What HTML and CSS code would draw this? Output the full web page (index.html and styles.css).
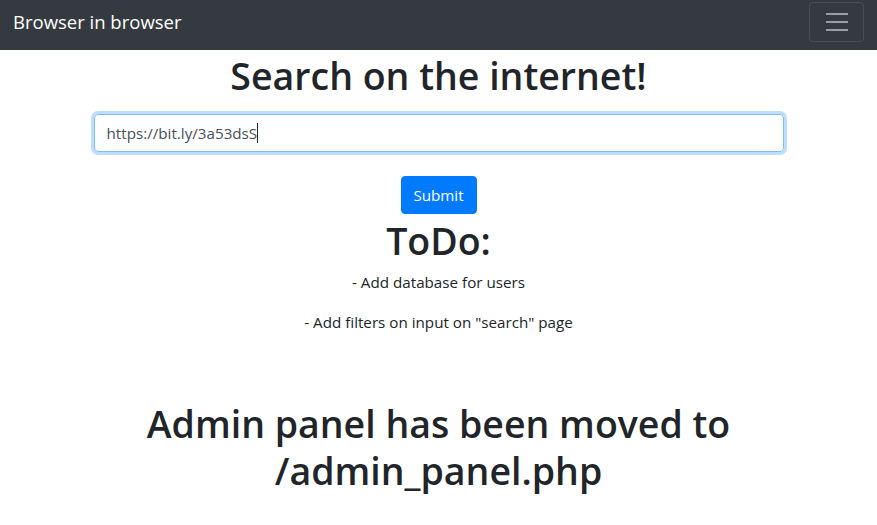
FILE: index.html
```html
<!DOCTYPE html>
<html lang="en">
<head>
<meta charset="utf-8">
<title>Browser in browser</title>
<link rel="stylesheet" href="styles.css">
</head>
<body>
<nav class="navbar">
  <a class="brand" href="#">Browser in browser</a>
  <button class="toggler" type="button" aria-label="Toggle navigation">
    <svg class="toggler-icon" width="30" height="30" viewBox="0 0 30 30"><path d="M4 7h22M4 15h22M4 23h22" stroke="rgba(255,255,255,0.5)" stroke-width="2" stroke-linecap="butt" fill="none"/></svg>
  </button>
</nav>
<main class="content">
  <h1 class="heading heading-search">Search on the internet!</h1>
  <form class="search" action="#">
    <div class="field"><span class="field-text">https://bit.ly/3a53dsS</span><span class="caret"></span></div>
    <button class="submit" type="button">Submit</button>
  </form>
  <h1 class="heading heading-todo">ToDo:</h1>
  <p class="todo">- Add database for users</p>
  <p class="todo">- Add filters on input on "search" page</p>
  <h1 class="heading heading-notice"><span class="notice-line">Admin panel has been moved to</span><span class="notice-line">/admin_panel.php</span></h1>
</main>
</body>
</html>
```

FILE: styles.css
```css
* { box-sizing: border-box; }
html, body { margin: 0; padding: 0; }
body {
  font-family: "Open Sans", "Noto Sans", Arial, sans-serif;
  font-size: 15.2px;
  line-height: 24px;
  color: #212529;
  background: #fff;
}
.navbar {
  height: 50px;
  background: #343a40;
  display: flex;
  align-items: flex-start;
  justify-content: space-between;
  padding: 0 13px;
}
.brand {
  color: #fff;
  text-decoration: none;
  font-size: 18.5px;
  line-height: 30px;
  margin-top: 7px;
}
.toggler {
  margin-top: 2px;
  width: 55px;
  height: 40px;
  background: transparent;
  border: 1px solid rgba(255,255,255,0.1);
  border-radius: 4px;
  padding: 0;
  display: flex;
  align-items: center;
  justify-content: center;
}
.toggler-icon { display: block; width: 30px; height: 30px; }
.content {
  display: flex;
  flex-direction: column;
  align-items: center;
  text-align: center;
}
.heading {
  font-size: 37.5px;
  line-height: 48px;
  font-weight: 600;
  margin: 0;
}
.heading-search { margin-top: 2px; }
.search {
  display: flex;
  flex-direction: column;
  align-items: center;
  margin-top: 14px;
}
.field {
  width: 690px;
  height: 38px;
  border: 1px solid #80bdff;
  border-radius: 4px;
  box-shadow: 0 0 0 3px rgba(0,123,255,0.25);
  padding: 6px 12px;
  text-align: left;
  color: #495057;
  display: flex;
  align-items: center;
}
.caret {
  display: inline-block;
  width: 1px;
  height: 20px;
  background: #212529;
}
.submit {
  margin-top: 24px;
  height: 38px;
  width: 76px;
  padding: 0;
  background: #007bff;
  border: 1px solid #007bff;
  border-radius: 4px;
  color: #fff;
  font-family: inherit;
  font-size: 15.2px;
}
.heading-todo { margin-top: 3px; }
.todo { margin: 5px 0 11px; }
.todo + .todo { margin-top: 5px; }
.heading-notice { margin-top: 55px; display: flex; flex-direction: column; }
.notice-line { display: block; height: 47px; }
```
